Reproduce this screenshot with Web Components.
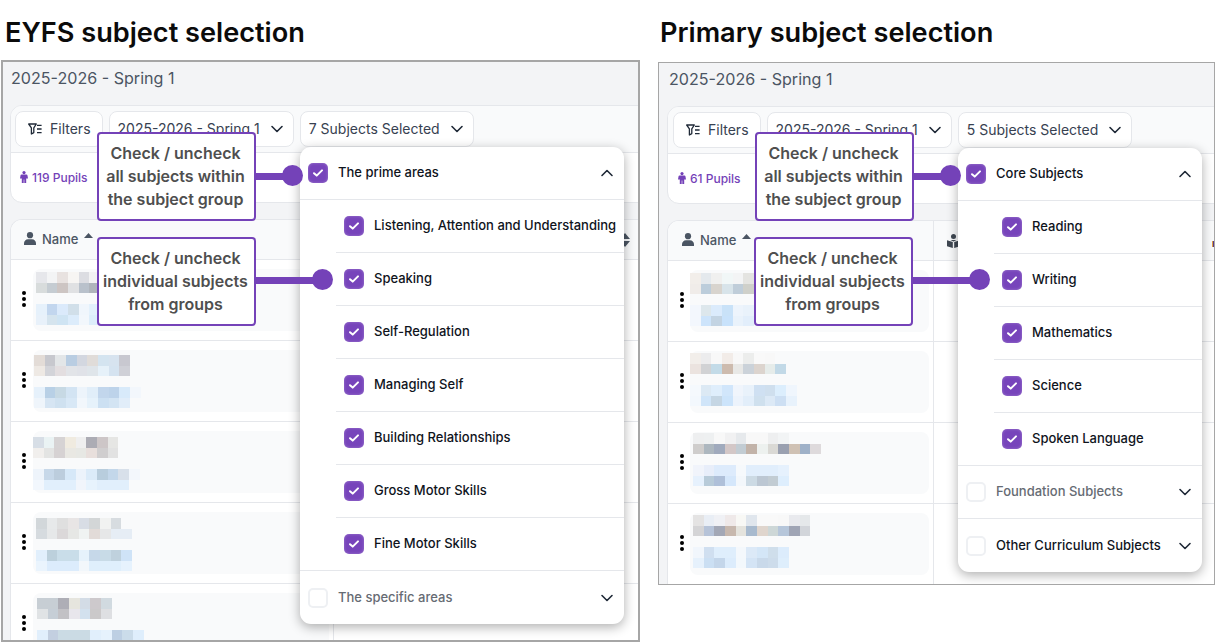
<!DOCTYPE html>
<html lang="en">
<head>
<meta charset="utf-8">
<title>Subject selection</title>
<style>
    html, body { margin: 0; padding: 0; background: #fff; }
    body { font-family: Inter, "Liberation Sans", sans-serif; width: 1217px; height: 642px; overflow: hidden; }
    .page { display: flex; gap: 18px; padding-left: 1px; align-items: flex-start; }
</style>
</head>
<body>
<div class="page">
    <guide-section heading="EYFS subject selection" style="--head: 60px; --text-x: 4px; width: 639px">
        <school-panel style="--bw: 2px; --pad: 7px; --title-x: 1px; --strip-x: 4px; --head-x: 13px; --col-w: 323px; --kebab: 11px; --sort-gap: 260px; height: 582px">
            <filter-card subjects="7 Subjects Selected" pupils="119 Pupils"></filter-card>
            <pupil-table>
                <pupil-row dx="3" dy="3"
                    name="e6e7eb f3f4f5 e8e2e0 f7f5f3 dcdde2 f2f2f3|d8dcdc c5ccd2 cdc5c3 e0e1e3 b9c1cb b0b5bc"
                    tags="e6f1fb c2d6ee dbeafb d1dfe9 f0f6fc e3f1fc|e8f1fa d5e4ee cfe4f3 dcecfb f2f7fc ddeefb"></pupil-row>
                <pupil-row dx="1" dy="5"
                    name="e3dcd7 c7c8ce e3e6e8 b9cde2 d3d7e0 e0dcd9 d4e4f0 d7e3ef c8c8d0|eee9e4 d3d4d9 e3dee0 e2e4e8 e0e2e8 dfe5ea e6f1f9 d5e3f0 cfd0d7"
                    tags="e6f1fb b8d0e6 c7d9e4 d3e4f3 edf4fb e1eef9 c2d6ec bdd3ea d8eafa f3f7fc|eff5fb d6e5f3 cfe1f0 d8e8f6 f2f7fc e6f2fb cce0f2 d3e4f3 e1edf9"></pupil-row>
                <pupil-row dx="-1" dy="6"
                    name="d7dee6 eaf3f4 d6d3d4 f0ebe0 efefef acacb4 cdc6c7 e6e6e4|f1efed e3e4e3 d6d2d3 e9e8e3 e7e8e4 e8dfdc d0cecf e2e2e2"
                    tags="eef4fb c7d8e9 bccddd d6e8f8 ecf3fb dbebf9 b8cddd c3d7ea d8e0ea f3f7fc|f2f7fd e1effc e1effc e1effc f1f5fb e7f3fd e1effc e1effc e1effc"></pupil-row>
                <pupil-row dx="3" dy="6"
                    name="d2d7da e7e9ea dfdfdf e8e5e5 d8dde5 d3d6d7 f1f2f1 d7dce0|d6dbdf e6e8e9 dbd8d9 e6e7e5 f0f3f2 e2dbd8 e6e7e8 e6edf5 e6edf5"
                    tags="e1effc bcd0dc c9dde9 c9dde9 e6f2fb c6d8e9 c8dbe7 bfd1dd cfe3f7|eaf4fd dcecfc dcecfc dcecfc f2f7fb dfeffc dfeffc dfeffc e6f2fd"></pupil-row>
                <pupil-row dx="4" dy="5"
                    name="c7ced4 c7ced4 aeaeb6 e6e5de d3dce6 cdc9cc d1dae0|e0e3e5 c6ced6 c2c1c5 e8e6ec d3e1ee cbc9ca dedfe2"
                    tags="e1effc c3cfe0 cbdbe4 cbdbe4 cbdbe4 e1effc e6f2fd bdcfe3 cbdcea dfeefc|e1effc e1effc e1effc e1effc e1effc e1effc e6f2fd e1effc e1effc dfeefc"></pupil-row>
            </pupil-table>

            <subject-menu slot="over" style="left: 297px; top: 85px; width: 324px">
                <subject-row label="The prime areas" checked chevron="up" full></subject-row>
                <subject-row sub label="Listening, Attention and Understanding" checked></subject-row>
                <subject-row sub label="Speaking" checked></subject-row>
                <subject-row sub label="Self-Regulation" checked></subject-row>
                <subject-row sub label="Managing Self" checked></subject-row>
                <subject-row sub label="Building Relationships" checked></subject-row>
                <subject-row sub label="Gross Motor Skills" checked></subject-row>
                <subject-row sub label="Fine Motor Skills" checked full></subject-row>
                <subject-row label="The specific areas" chevron="down" muted last></subject-row>
            </subject-menu>
            <call-out slot="over" reach="36" line="44" style="left: 94px; top: 70px">Check / uncheck<br>all subjects within<br>the subject group</call-out>
            <call-out slot="over" reach="66" line="43" style="left: 94px; top: 175px">Check / uncheck<br>individual subjects<br>from groups</call-out>
        </school-panel>
    </guide-section>

    <guide-section heading="Primary subject selection" style="--head: 62px; --text-x: 2px; width: 557px">
        <school-panel style="--bw: 1px; --pad: 8px; --title-x: 2px; --strip-x: 5px; --head-x: 14px; --col-w: 266px; --kebab: 12px; --sort-gap: 252px; height: 523px">
            <filter-card subjects="5 Subjects Selected" pupils="61 Pupils"></filter-card>
            <pupil-table mark>
                <pupil-row dx="-1" dy="3"
                    name="f2eeea e4e9ed f0f0ef f1f7f7 f3f4f5 e4e4e1|f0ece9 bccddb d8d4ce d8e4ea bfcdd9 cfd0ca"
                    tags="f3f7fd dde7ec dbebfc c9e2f8 edf4fc e9f2fb|f3f7fd cde4fb c3d4e3 c8e2fb e9f2fb e2eefb"></pupil-row>
                <pupil-row dx="-1" dy="2"
                    name="f2eeea ececed f8f8f8 f2ece8 f8f8f8 ecedec f9f9f9 f8f8f8 f9fafb|ebe3df d1d2d4 c3dbe8 cdbbae e8e8e6 cbd2d9 dcd4ce e6ecea c2d9e7"
                    tags="f5f9fd dce9f4 dfeefc d1e6fb f0f5fc e9f2fb cfe0f2 cfdfee dceefd f0f6fd|f3f8fd d0e5f9 c5d6e4 cce4fb ecf3fc e2eefa cfe0ee dce9f6 cddff3 e8f2fc"></pupil-row>
                <pupil-row dx="3" dy="1"
                    name="eeeff0 eef0f1 f8f8f8 f1f1f2 e6e9ec f8f8f8 f8f8f8 eeeff0 f2f4f5 f9fafb f9fafb f9fafb|cfcdcc adb7bf a0aabd d3c7c7 c2ccd3 c2b3a9 edf1ef dad9d5 9aa0b0 cfc1b4 9fb1c8 dedadc"
                    tags="f1f4fb e8eefa ddebfc ddebfc f6f9fc e1eefc e1eefc e1eefc e6f1fd|e6f1fd b8cbd9 afc0d9 d5e7fb f3f7fb ccdae4 bcc7d3 c2ccd3 deeefd"></pupil-row>
                <pupil-row dx="3" dy="2"
                    name="e4e3e3 e9eef5 f0f1f5 efe9e9 f8f8f5 e0e6ed f9f9f9 f9f9f9 f8f8f8 e9eaee e5e8ea|d4d4d6 b6c3d8 a3a8b6 c7b8ae e4e3dd a8bace dfd5cd cdd7d7 b6c6da a0a5b5 d2d5da"
                    tags="f1f6fc d0dff0 dfeefc dfeefc f4f8fc dce9f7 d4e6f7 cfdeeb dcecfc|e6f1fc cbdff3 c4d6ea dcecfc f3f8fc d4e4f5 c9d9ea cddceb deeefc"></pupil-row>
            </pupil-table>

            <subject-menu slot="over" style="left: 299px; top: 85px; width: 244px">
                <subject-row label="Core Subjects" checked chevron="up" full></subject-row>
                <subject-row sub label="Reading" checked></subject-row>
                <subject-row sub label="Writing" checked></subject-row>
                <subject-row sub label="Mathematics" checked></subject-row>
                <subject-row sub label="Science" checked></subject-row>
                <subject-row sub label="Spoken Language" checked full></subject-row>
                <subject-row label="Foundation Subjects" chevron="down" muted full></subject-row>
                <subject-row label="Other Curriculum Subjects" chevron="down" last></subject-row>
            </subject-menu>
            <call-out slot="over" reach="36" line="44" style="left: 96px; top: 69px">Check / uncheck<br>all subjects within<br>the subject group</call-out>
            <call-out slot="over" reach="66" line="43" style="left: 95px; top: 174px">Check / uncheck<br>individual subjects<br>from groups</call-out>
        </school-panel>
    </guide-section>
</div>

<script>
const CHEVRON = dir => `<svg width="14" height="14" viewBox="0 0 14 14" fill="none" stroke="#1f2937" stroke-width="1.6" stroke-linecap="round" stroke-linejoin="round"><path d="${dir === 'up' ? 'M2 9.5 7 4.5l5 5' : 'M2 4.5 7 9.5l5-5'}"/></svg>`;

class GuideSection extends HTMLElement {
    constructor() {
        super();
        this.attachShadow({ mode: 'open' });
        this.shadowRoot.innerHTML = `
            <style>
                :host { display: block; flex: none; }
                h1 {
                    margin: 0;
                    height: var(--head);
                    padding-left: var(--text-x);
                    box-sizing: border-box;
                    font: 600 27.15px/66px Inter, "Liberation Sans", sans-serif;
                    color: #0b0b0b;
                }
            </style>
            <h1>${this.getAttribute('heading') || ''}</h1>
            <slot></slot>
        `;
    }
}

class SchoolPanel extends HTMLElement {
    constructor() {
        super();
        this.attachShadow({ mode: 'open' });
        this.shadowRoot.innerHTML = `
            <style>
                :host {
                    display: block;
                    position: relative;
                    overflow: hidden;
                    box-sizing: border-box;
                    border: var(--bw) solid #a6a6a6;
                    background: #f3f4f6;
                    padding-left: var(--pad);
                }
                .title {
                    height: 43px;
                    padding: 6px 0 0 var(--title-x);
                    box-sizing: border-box;
                    font-size: 16.1px;
                    line-height: 20px;
                    color: #4b5563;
                }
            </style>
            <div class="title">2025-2026 - Spring 1</div>
            <slot></slot>
            <slot name="over"></slot>
        `;
    }
}

class FilterCard extends HTMLElement {
    constructor() {
        super();
        this.attachShadow({ mode: 'open' });
        this.shadowRoot.innerHTML = `
            <style>
                :host {
                    display: block;
                    margin-right: -20px;
                    border: 1px solid #e5e7eb;
                    border-radius: 12px;
                    background: #fff;
                    overflow: hidden;
                }
                .strip {
                    display: flex;
                    gap: 6px;
                    padding: 5px var(--strip-x);
                    background: #f9fafb;
                    border-bottom: 1px solid #e5e7eb;
                }
                .btn {
                    display: flex;
                    align-items: center;
                    height: 36px;
                    box-sizing: border-box;
                    padding: 0 9px 1px 8px;
                    gap: 10px;
                    background: #fff;
                    border: 1px solid #e5e7eb;
                    border-radius: 8px;
                    font-size: 14px;
                    color: #374151;
                    white-space: nowrap;
                }
                .btn.filters { padding: 0 11px 1px 12px; gap: 8px; }
                .pupils {
                    display: flex;
                    align-items: center;
                    gap: 4px;
                    height: 49px;
                    box-sizing: border-box;
                    padding: 0 0 1px calc(var(--strip-x) + 5px);
                    font-size: 12px;
                    font-weight: 550;
                    color: #7442b8;
                }
                svg { flex: none; display: block; }
            </style>
            <div class="strip">
                <div class="btn filters">
                    <svg width="14" height="12" viewBox="0 0 14 12" fill="none" stroke="#1f2937" stroke-width="1.3" stroke-linejoin="round"><path d="M.7 1h7.600L5.800 4.800v4.800L3.400 11V4.800z"/><path d="M9 2.400h4.600M9 6h4.600M9 9.600h4.600"/></svg>
                    Filters
                </div>
                <div class="btn">2025-2026 - Spring 1 ${CHEVRON('down')}</div>
                <div class="btn">${this.getAttribute('subjects')} ${CHEVRON('down')}</div>
            </div>
            <div class="pupils">
                <svg width="8" height="12" viewBox="0 0 8 12" fill="#7442b8"><circle cx="4" cy="1.600" r="1.600"/><path d="M1.600 3.600h4.800c.6 0 1 .4 1.100 1l.5 3H6.200v4.400H4.300V8.600h-.6V12H1.800V7.600H0l.5-3c.1-.6.5-1 1.100-1z"/></svg>
                ${this.getAttribute('pupils')}
            </div>
        `;
    }
}

class PupilTable extends HTMLElement {
    constructor() {
        super();
        // the column after the book icon ends in a sort arrow or, at the clipped edge, a coloured mark
        const endIcon = this.hasAttribute('mark')
            ? '<svg width="3" height="14" viewBox="0 0 3 14" style="margin-top: 6px"><path fill="#e0a040" d="M0 4h1v6H0z"/><path fill="#5a3a8a" d="M1 4h2v6H1z"/></svg>'
            : '<svg width="10" height="14" viewBox="0 0 10 14" fill="#4b5563"><path d="M5 0 10 6H0zM0 8h10l-5 6z"/></svg>';

        this.attachShadow({ mode: 'open' });
        this.shadowRoot.innerHTML = `
            <style>
                :host {
                    display: block;
                    margin: 16px -20px 0 0;
                    background: #fff;
                    border: 1px solid #e5e7eb;
                    border-bottom: 0;
                    border-radius: 12px 12px 0 0;
                    overflow: hidden;
                }
                .head {
                    display: grid;
                    grid-template-columns: var(--col-w) 1fr;
                    height: 40px;
                    box-sizing: border-box;
                    background: #f9fafb;
                    border-bottom: 1px solid #e5e7eb;
                    font-size: 13px;
                    font-weight: 500;
                    color: #4b5563;
                }
                .name {
                    display: flex;
                    align-items: center;
                    gap: 6px;
                    padding: 0 0 2px var(--head-x);
                    border-right: 1px solid #e5e7eb;
                }
                .rest {
                    display: flex;
                    align-items: center;
                    padding-left: 13px;
                    gap: var(--sort-gap);
                }
                svg { flex: none; display: block; }
            </style>
            <div class="head">
                <div class="name">
                    <svg width="12" height="13" viewBox="0 0 12 13" fill="#4b5563"><circle cx="6" cy="3.200" r="3.100"/><path d="M0 13v-1.700C0 9 1.800 7.300 4 7.300h4c2.200 0 4 1.700 4 4V13z"/></svg>
                    Name
                    <svg width="9" height="5" viewBox="0 0 9 5" fill="#4b5563" style="margin: -6px 0 0 0"><path d="M4.500 0 9 5H0z"/></svg>
                </div>
                <div class="rest">
                    <svg width="13" height="14" viewBox="0 0 13 14" fill="#3f4752"><circle cx="6.500" cy="2.500" r="2.500"/><path d="M0 6.200 5.800 8v6L0 12.200zM13 6.200 7.200 8v6l5.800-1.800zM3.500 6h6L6.500 7.500z"/></svg>
                    ${endIcon}
                </div>
            </div>
            <slot></slot>
        `;
    }
}

class PupilRow extends HTMLElement {
    constructor() {
        super();
        const blockOf = attr => (this.getAttribute(attr) || '').split('|').map(row =>
            `<div class="line">${row.split(' ').map(c => `<i style="background:#${c}"></i>`).join('')}</div>`
        ).join('');

        this.attachShadow({ mode: 'open' });
        this.shadowRoot.innerHTML = `
            <style>
                :host {
                    display: grid;
                    grid-template-columns: var(--col-w) 1fr;
                    height: 81px;
                    box-sizing: border-box;
                    border-bottom: 1px solid #e5e7eb;
                }
                .first {
                    display: flex;
                    align-items: center;
                    border-right: 1px solid #e5e7eb;
                    padding-left: var(--kebab);
                    padding-right: 4px;
                }
                .kebab {
                    flex: none;
                    margin-top: -2px;
                    display: flex;
                    flex-direction: column;
                    gap: 2px;
                    width: calc(22px - var(--kebab));
                }
                .kebab b { width: 4px; height: 4px; border-radius: 50%; background: #000; }
                .cell {
                    flex: 1;
                    height: 62px;
                    box-sizing: border-box;
                    padding-top: ${this.getAttribute('dy') || 0}px;
                    padding-left: ${this.getAttribute('dx') || 0}px;
                    background: #f9fafb;
                    border-radius: 8px;
                }
                .line { display: flex; height: 10.5px; }
                .tags { margin-top: 11px; }
                i { display: block; flex: none; width: 10.67px; }
            </style>
            <div class="first">
                <div class="kebab"><b></b><b></b><b></b></div>
                <div class="cell">
                    <div>${blockOf('name')}</div>
                    <div class="tags">${blockOf('tags')}</div>
                </div>
            </div>
            <div></div>
        `;
    }
}

class SubjectMenu extends HTMLElement {
    constructor() {
        super();
        this.attachShadow({ mode: 'open' });
        this.shadowRoot.innerHTML = `
            <style>
                :host {
                    display: block;
                    position: absolute;
                    background: #fff;
                    border-radius: 11px;
                    box-shadow: 0 3px 12px rgba(0, 0, 0, .32);
                }
            </style>
            <slot></slot>
        `;
    }
}

class SubjectRow extends HTMLElement {
    constructor() {
        super();
        const chevron = this.getAttribute('chevron');
        const isSub = this.hasAttribute('sub');
        const isLast = this.hasAttribute('last');
        const isFull = this.hasAttribute('full');
        const isChecked = this.hasAttribute('checked');

        this.attachShadow({ mode: 'open' });
        this.shadowRoot.innerHTML = `
            <style>
                :host { display: block; }
                .row {
                    display: flex;
                    align-items: center;
                    gap: 10px;
                    height: ${isLast ? 53 : 52}px;
                    box-sizing: border-box;
                    padding: 0 ${isSub ? 4 : 10}px 0 ${isSub ? 44 : 8}px;
                    white-space: nowrap;
                    font-size: 13px;
                    font-weight: 500;
                    color: ${this.hasAttribute('muted') ? '#666b73' : '#0f141c'};
                }
                .box {
                    flex: none;
                    width: 20px;
                    height: 20px;
                    box-sizing: border-box;
                    border-radius: 5px;
                    display: flex;
                    align-items: center;
                    justify-content: center;
                    background: #fff;
                    border: 2px solid #eef0f3;
                }
                .box.on {
                    background: #7744bb;
                    border: 0;
                    box-shadow: inset 0 0 3px rgba(255, 255, 255, .3);
                }
                .grow { flex: 1; padding-bottom: 2px; }
                .rule { height: 1px; background: #e5e7eb; margin-left: ${isSub && !isFull ? 36 : 0}px; }
                svg { flex: none; display: block; }
            </style>
            <div class="row">
                <div class="box ${isChecked ? 'on' : ''}">
                    ${isChecked ? '<svg width="12" height="10" viewBox="0 0 12 10" fill="none" stroke="#fff" stroke-width="2" stroke-linecap="round" stroke-linejoin="round"><path d="M2 5.200 4.700 7.600 10 2.400"/></svg>' : ''}
                </div>
                <span class="grow">${this.getAttribute('label')}</span>
                ${chevron ? CHEVRON(chevron) : ''}
            </div>
            ${isLast ? '' : '<div class="rule"></div>'}
        `;
    }
}

class CallOut extends HTMLElement {
    constructor() {
        super();
        const reach = Number(this.getAttribute('reach'));
        const line = Number(this.getAttribute('line'));

        this.attachShadow({ mode: 'open' });
        this.shadowRoot.innerHTML = `
            <style>
                :host {
                    display: block;
                    position: absolute;
                    width: 159px;
                    height: 89px;
                    box-sizing: border-box;
                    padding: 8px 2px 0 0;
                    background: #fff;
                    border: 2px solid #7442b8;
                    border-radius: 4px;
                    text-align: center;
                    font-size: 16px;
                    font-weight: 560;
                    line-height: 23px;
                    color: #4f4f4f;
                    white-space: nowrap;
                }
                .line {
                    position: absolute;
                    left: 100%;
                    margin-left: 2px;
                    top: ${line - 5}px;
                    width: ${reach}px;
                    height: 7px;
                    background: #7442b8;
                }
                .dot {
                    position: absolute;
                    right: -11px;
                    top: -8px;
                    width: 21px;
                    height: 21px;
                    border-radius: 50%;
                    background: #7442b8;
                }
            </style>
            <slot></slot>
            <div class="line"><div class="dot"></div></div>
        `;
    }
}

customElements.define('guide-section', GuideSection);
customElements.define('school-panel', SchoolPanel);
customElements.define('filter-card', FilterCard);
customElements.define('pupil-table', PupilTable);
customElements.define('pupil-row', PupilRow);
customElements.define('subject-menu', SubjectMenu);
customElements.define('subject-row', SubjectRow);
customElements.define('call-out', CallOut);
</script>
</body>
</html>
